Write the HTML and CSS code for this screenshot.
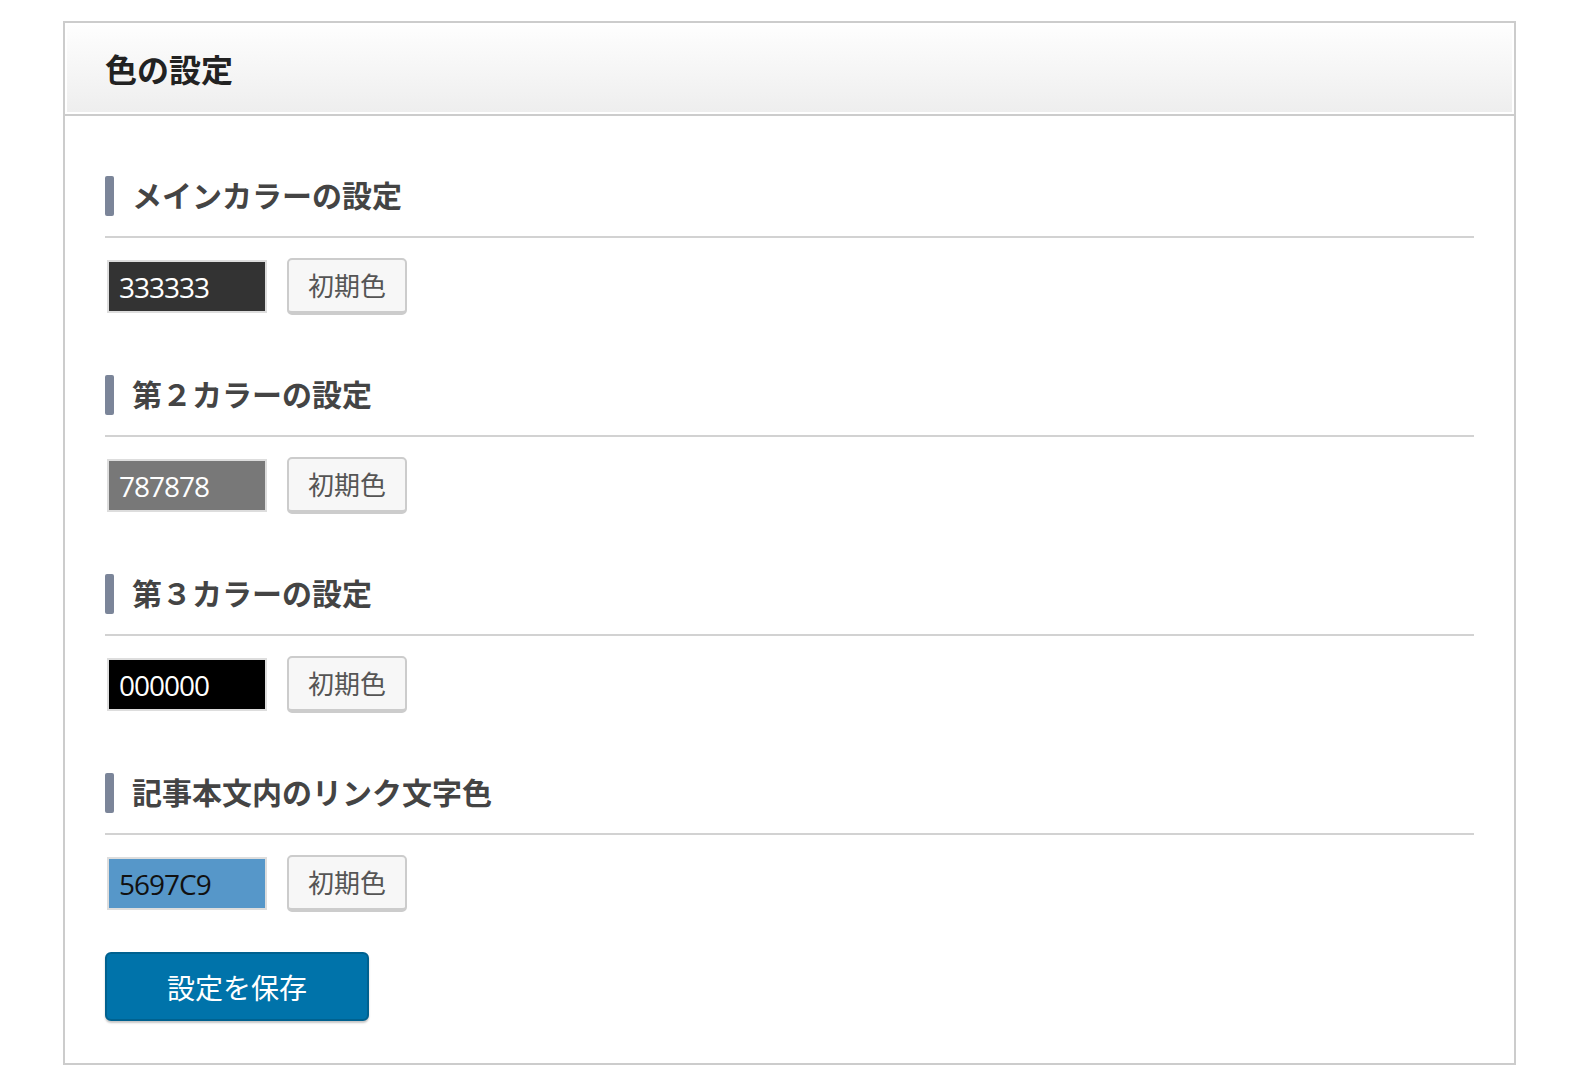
FILE: index.html
```html
<!DOCTYPE html>
<html lang="ja">
<head>
<meta charset="utf-8">
<title>色の設定</title>
<link rel="stylesheet" href="styles.css">
</head>
<body>
<div class="panel">
  <div class="panel-head">
    <div class="panel-head-inner">
      <h2 class="panel-title">色の設定</h2>
    </div>
  </div>
  <div class="panel-body">
    <div class="section">
      <h3 class="section-title"><span class="bar"></span><span class="label">メインカラーの設定</span></h3>
      <div class="row">
        <input class="color-input c-main" type="text" value="333333">
        <button class="reset-btn" type="button">初期色</button>
      </div>
    </div>
    <div class="section">
      <h3 class="section-title"><span class="bar"></span><span class="label">第２カラーの設定</span></h3>
      <div class="row">
        <input class="color-input c-second" type="text" value="787878">
        <button class="reset-btn" type="button">初期色</button>
      </div>
    </div>
    <div class="section">
      <h3 class="section-title"><span class="bar"></span><span class="label">第３カラーの設定</span></h3>
      <div class="row">
        <input class="color-input c-third" type="text" value="000000">
        <button class="reset-btn" type="button">初期色</button>
      </div>
    </div>
    <div class="section last">
      <h3 class="section-title"><span class="bar"></span><span class="label">記事本文内のリンク文字色</span></h3>
      <div class="row">
        <input class="color-input c-link" type="text" value="5697C9">
        <button class="reset-btn" type="button">初期色</button>
      </div>
    </div>
    <button class="save-btn" type="button">設定を保存</button>
  </div>
</div>
</body>
</html>
```

FILE: styles.css
```css
* {
  box-sizing: border-box;
}

body {
  margin: 0;
  background: #ffffff;
  font-family: "Noto Sans CJK JP", "Noto Sans", sans-serif;
  color: #444444;
}

.panel {
  margin: 21px 0 0 63px;
  width: 1453px;
  border: 2px solid #cccccc;
  background: #ffffff;
}

.panel-head {
  padding: 2px;
  border-bottom: 2px solid #cccccc;
}

.panel-head-inner {
  height: 87px;
  display: flex;
  align-items: center;
  padding-left: 38px;
  background: linear-gradient(to bottom, #fefefe 0%, #eeeeee 100%);
}

.panel-title {
  margin: 0;
  padding-bottom: 1px;
  font-size: 32px;
  font-weight: 700;
  color: #222222;
  line-height: 1.2;
}

.panel-body {
  padding: 60px 40px 42px 40px;
}

.section {
  margin-bottom: 60px;
}

.section.last {
  margin-bottom: 40px;
}

.section-title {
  margin: 0;
  display: flex;
  align-items: center;
  height: 62px;
  padding-bottom: 20px;
  border-bottom: 2px solid #d2d2d2;
  font-size: 30px;
  font-weight: 700;
  color: #444444;
  line-height: 1;
}

.label {
  padding-bottom: 5px;
}

.bar {
  display: block;
  width: 9px;
  height: 40px;
  margin-right: 18px;
  border-radius: 2px;
  background: #7b8599;
}

.row {
  display: flex;
  align-items: center;
  margin-top: 20px;
  gap: 20px;
}

.color-input {
  width: 160px;
  height: 53px;
  margin: 0 0 0 2px;
  padding: 0 0 0 10px;
  border: 2px solid #dddddd;
  font-family: "Open Sans", "Noto Sans CJK JP", sans-serif;
  font-size: 28px;
  letter-spacing: -1px;
  outline: none;
}

.c-main {
  background: #333333;
  color: #ffffff;
}

.c-second {
  background: #787878;
  color: #ffffff;
}

.c-third {
  background: #000000;
  color: #ffffff;
}

.c-link {
  background: #5697c9;
  color: #111111;
}

.reset-btn {
  width: 120px;
  height: 57px;
  padding: 0 0 2px 0;
  border: 2px solid #cccccc;
  border-bottom-width: 4px;
  border-radius: 5px;
  background: #f7f7f7;
  color: #555555;
  font-family: "Noto Sans CJK JP", sans-serif;
  font-size: 26px;
}

.save-btn {
  display: block;
  width: 264px;
  height: 69px;
  padding: 0 0 0 0;
  border: 2px solid #00618f;
  border-radius: 6px;
  background: #0073aa;
  color: #ffffff;
  font-family: "Noto Sans CJK JP", sans-serif;
  font-size: 28px;
  box-shadow: 0 2px 2px rgba(0, 0, 0, 0.22);
}
```
